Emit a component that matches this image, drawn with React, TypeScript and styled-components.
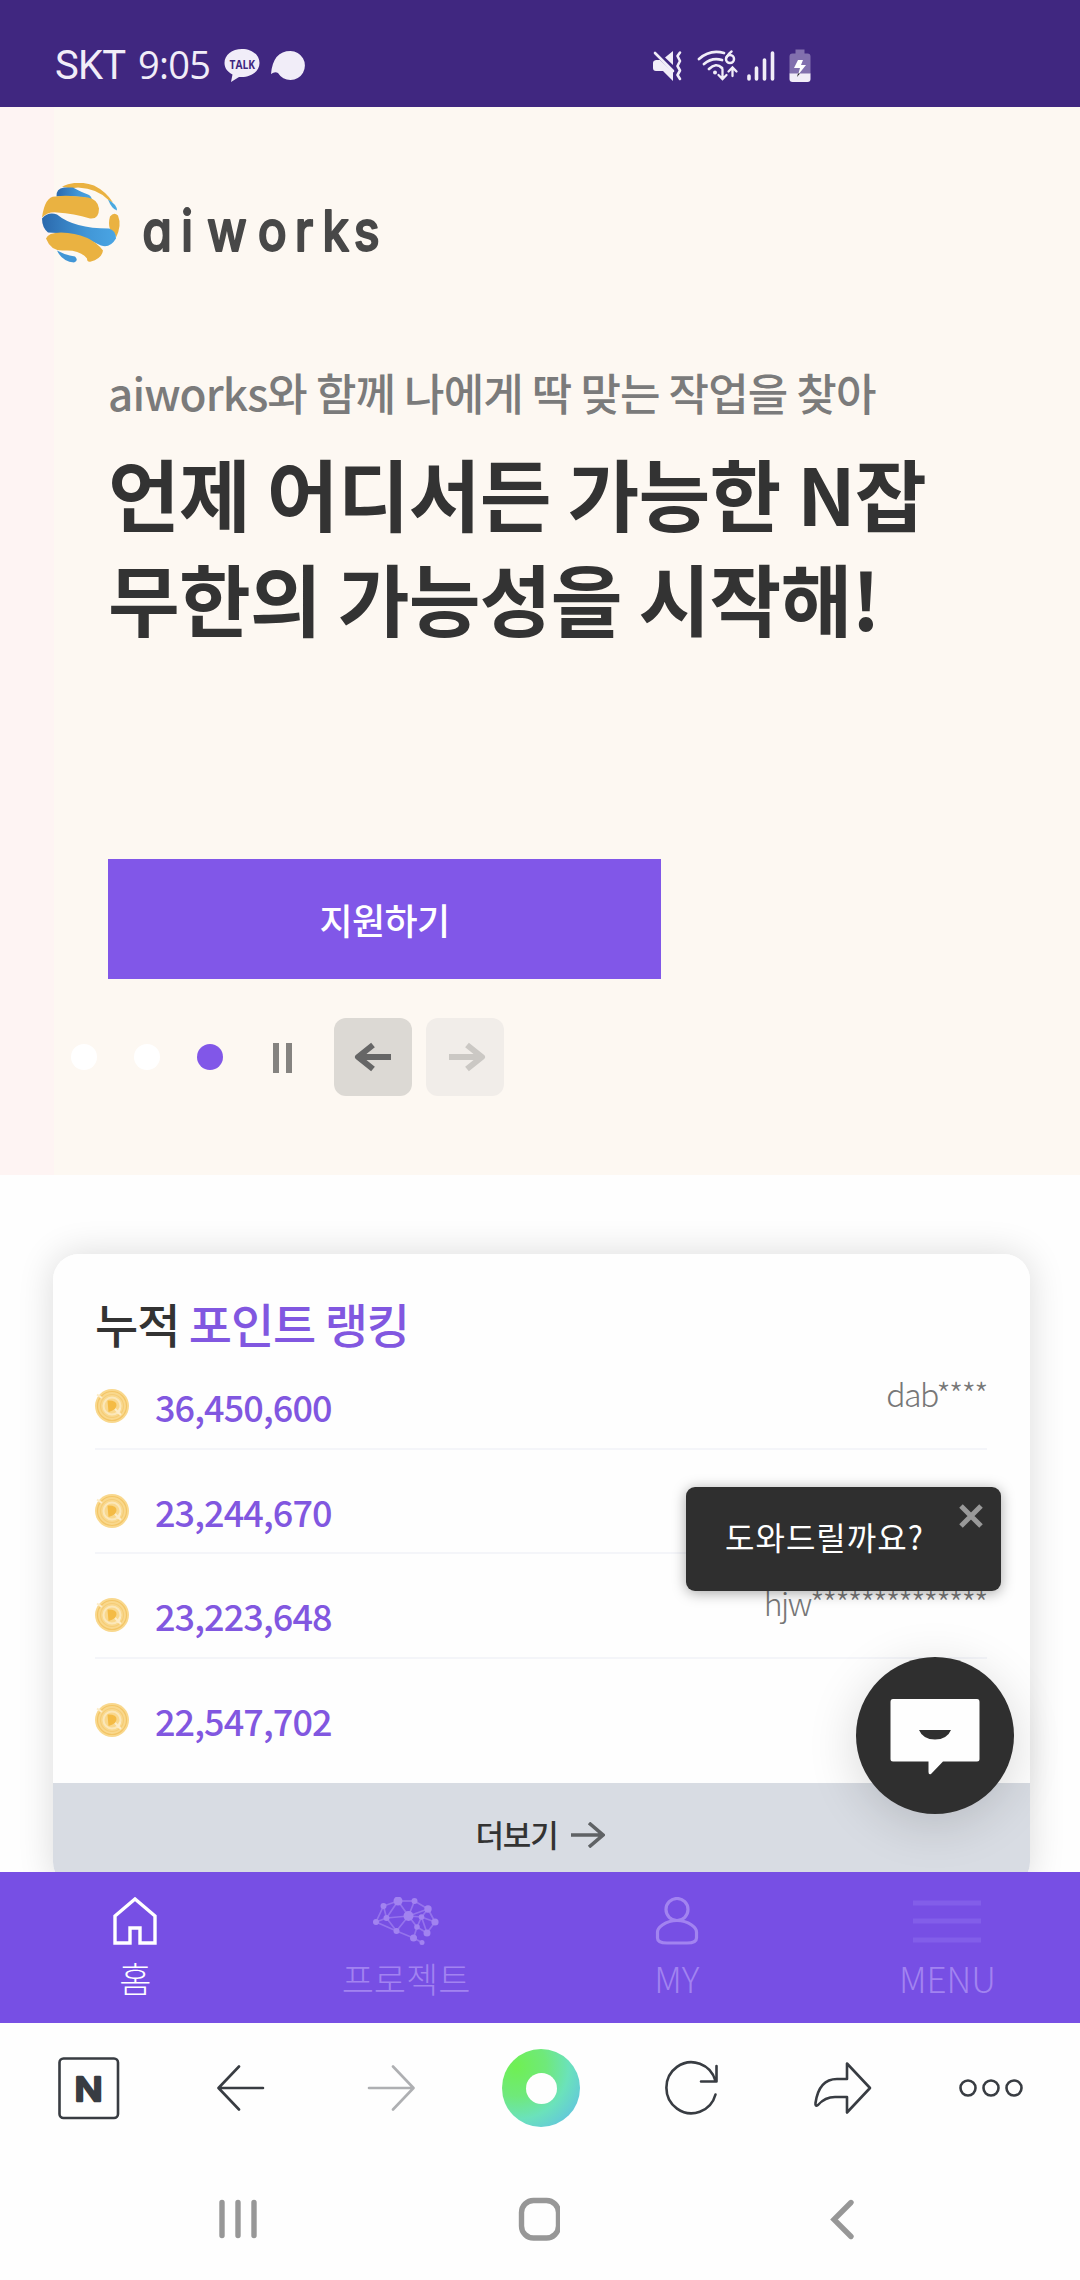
import React from "react";
import styled, { createGlobalStyle } from "styled-components";

const KR = `"Noto Sans CJK KR", "Noto Sans", sans-serif`;

const Global = createGlobalStyle`
  * { box-sizing: border-box; }
  body { margin: 0; background: #fff; font-family: ${KR}; }
`;

const Screen = styled.div`
  position: relative;
  width: 1080px;
  height: 2280px;
  overflow: hidden;
  display: flex;
  flex-direction: column;
  background: #fefefe;
  white-space: nowrap;
`;

/* ---------- status bar ---------- */
const StatusBar = styled.header`
  height: 107px;
  flex: none;
  background: #402780;
  display: flex;
  align-items: center;
  padding: 24px 56px 0 55px;
  color: #f1edf8;
`;
const Carrier = styled.span`
  font: 400 40px/48px Roboto, sans-serif;
  width: 83px;
  letter-spacing: -0.8px;
`;
const Clock = styled.span`
  font: 400 38px/48px "Open Sans", sans-serif;
  letter-spacing: -0.7px;
  width: 86px;
  padding-bottom: 3px;
`;
const StatusIcons = styled.div`
  display: flex;
  align-items: center;
`;
const StatusRight = styled(StatusIcons)`
  margin-left: 347px;
`;

/* ---------- hero ---------- */
const Hero = styled.section`
  height: 1068px;
  flex: none;
  display: flex;
  background: #fdf8f2;
`;
const HeroEdge = styled.div`
  width: 54px;
  flex: none;
  background: #fef4f3;
`;
const HeroBody = styled.div`
  flex: 1;
  display: flex;
  flex-direction: column;
`;
const Brand = styled.div`
  display: flex;
  margin: 76px 0 0 -12px;
  height: 80px;
`;
const Lead = styled.p`
  margin: 94px 0 0 54px;
  font-size: 44px;
  line-height: 70px;
  font-weight: 500;
  letter-spacing: -0.9px;
  color: #7b7b7b;
`;
const Headline = styled.h1`
  margin: 13px 0 0 54px;
  font-size: 78px;
  line-height: 105px;
  font-weight: 700;
  letter-spacing: -0.8px;
  color: #333;
`;
const ApplyButton = styled.button`
  margin: 209px 0 0 54px;
  width: 553px;
  height: 120px;
  border: 0;
  padding: 0 0 1px;
  background: #8157e8;
  color: #fff;
  font: 500 36px/50px ${KR};
  letter-spacing: -0.6px;
`;
const SliderBar = styled.div`
  display: flex;
  align-items: center;
  margin: 39px 0 0 17px;
  height: 78px;
`;
const Dot = styled.i<{ $on?: boolean }>`
  width: 26px;
  height: 26px;
  border-radius: 50%;
  margin-right: 37px;
  background: ${(p) => (p.$on ? "#8157e8" : "#fff")};
`;
const Pause = styled.div`
  width: 19px;
  height: 30px;
  margin: 1px 42px 0 13px;
  border: solid #858380;
  border-width: 0 6px;
`;
const Arrow = styled.div<{ $off?: boolean }>`
  width: 78px;
  height: 78px;
  margin-right: 13.5px;
  border-radius: 12px;
  display: grid;
  place-items: center;
  padding-left: ${(p) => (p.$off ? 5 : 0)}px;
  background: ${(p) => (p.$off ? "#f1ede9" : "#dcd9d4")};
  color: ${(p) => (p.$off ? "#cbc8c4" : "#666")};
`;

/* ---------- ranking card ---------- */
const Main = styled.main`
  height: 697px;
  flex: none;
  overflow: hidden;
  padding: 79px 50px 0 53px;
`;
const Card = styled.section`
  height: 634px;
  border-radius: 26px;
  overflow: hidden;
  background: #fefefe;
  display: flex;
  flex-direction: column;
`;
const CardShadow = styled.div`
  border-radius: 26px;
  box-shadow: 0 0 36px rgba(0, 0, 0, 0.14);
`;
const CardTitle = styled.h2`
  margin: 34px 42px 0;
  height: 57px;
  flex: none;
  font-size: 47px;
  line-height: 70px;
  font-weight: 500;
  letter-spacing: -1.1px;
  color: #333;
`;
const Accent = styled.span`
  color: #8157e0;
`;
const Row = styled.div<{ $last?: boolean }>`
  height: ${(p) => (p.$last ? 124.2 : 104.6)}px;
  flex: none;
  margin: 0 43px 0 42px;
  display: flex;
  border-bottom: 2px solid ${(p) => (p.$last ? "transparent" : "#f4f5f9")};
`;
const CoinSlot = styled.div`
  width: 60px;
  padding-top: 44px;
`;
const Points = styled.span`
  padding-top: 36px;
  font-size: 36px;
  line-height: 50px;
  font-weight: 500;
  letter-spacing: -0.9px;
  color: #8157e0;
`;
const User = styled.span`
  margin-left: auto;
  padding-top: 24px;
  font-size: 32px;
  line-height: 48px;
  font-weight: 300;
  letter-spacing: -1.55px;
  color: #777;
`;
const More = styled.div`
  flex: 1;
  background: #d8dce3;
  display: flex;
  justify-content: center;
  gap: 14px;
  padding: 28px 2px 0 0;
  font-size: 31px;
  line-height: 46px;
  font-weight: 500;
  letter-spacing: -1.2px;
  color: #333;
`;
const MoreArrow = styled.svg`
  margin-top: 11px;
`;

/* ---------- floating chat helper ---------- */
const Helper = styled.div`
  position: absolute;
  left: 686px;
  top: 1487px;
  width: 315px;
  height: 104px;
  padding: 25px 0 0 39px;
  border-radius: 9px;
  background: #2f2f2f;
  box-shadow: 0 2px 14px rgba(0, 0, 0, 0.35);
  color: #fff;
  font-size: 32px;
  line-height: 48px;
  letter-spacing: 1px;
`;
const Close = styled.svg`
  position: absolute;
  right: 18px;
  top: 17px;
`;
const ChatButton = styled.div`
  position: absolute;
  left: 856px;
  top: 1657px;
  width: 158px;
  height: 157px;
  border-radius: 50%;
  background: #2f2f2f;
  box-shadow: 0 10px 50px rgba(0, 0, 0, 0.15);
`;

/* ---------- tab bar ---------- */
const Tabs = styled.nav`
  position: relative;
  height: 151px;
  flex: none;
  display: grid;
  grid-template-columns: repeat(4, 270.7px);
  background: #774fe4;
`;
const Tab = styled.div<{ $on?: boolean }>`
  display: flex;
  flex-direction: column;
  align-items: center;
  padding-top: 25px;
  color: ${(p) => (p.$on ? "#fff" : "#a283f0")};
  font-size: 35px;
  font-weight: 300;
  line-height: 50px;
`;
const TabLabel = styled.span`
  margin-top: 8px;
`;

/* ---------- browser toolbar and system navigation ---------- */
const Toolbar = styled.div`
  height: 130px;
  flex: none;
  display: flex;
  align-items: center;
  justify-content: space-between;
  padding: 0 53px 0 54px;
`;
const SystemNav = styled.div`
  height: 127px;
  flex: none;
  display: flex;
  justify-content: space-between;
  padding: 44px 220px 0 216px;
`;

const Mute = () => (
  <svg width="32" height="32" viewBox="0 0 32 32" fill="currentColor">
    <path d="M4 10H8L21 22V31L11 21H4Q1 21 1 18V13Q1 10.500 4 10ZM13 7.500 21 1V15Z" />
    <path d="M3 3 21 21" stroke="currentColor" strokeWidth="2.6" strokeLinecap="round" />
    <path d="M28 2.500 25.500 6 28 11 25.500 16 28 20.500 25.500 25 28 29" fill="none" stroke="currentColor" strokeWidth="2.6" strokeLinecap="round" strokeLinejoin="round" />
  </svg>
);
const Gap = styled.i<{ $w: number }>`
  width: ${(p) => p.$w}px;
`;
const Wifi = () => (
  <svg width="42" height="34" viewBox="0 0 42 34" fill="none" stroke="currentColor" strokeWidth="2.700" strokeLinecap="round">
    <path d="M2 10Q13 0 27 4M7 15Q15 8 25 11M12 20Q19 13 25 19" />
    <circle cx="18" cy="23.500" r="2" fill="currentColor" stroke="none" />
    <circle cx="33" cy="10" r="4" strokeWidth="2.500" />
    <path d="M29.500 8.500Q31 5 34.500 2.500" strokeWidth="2.500" />
    <path d="M25.500 20.500v9.500m-4-4 4 4 4-4M35.500 27V18.500m-4 4 4-4 4 4" strokeWidth="2.300" />
  </svg>
);
const Signal = () => (
  <svg width="30" height="32" viewBox="0 0 30 32" stroke="currentColor" strokeWidth="3.600" strokeLinecap="round">
    <path d="M3 26V29M10.500 18V29M18.500 10V29M26.500 3V29" />
  </svg>
);
const Battery = () => (
  <svg width="22" height="34" viewBox="0 0 22 34">
    <path d="M6.500 0.500h9v4h3q3 0 3 3V25H.5V7.500q0-3 3-3h3Z" fill="#8270ae" />
    <path d="M.5 24.500h21V30q0 3-3 3h-15q-3 0-3-3Z" fill="#f1edf8" />
    <path d="M9 11h5l-2 5h5L9 26l2-7H5Z" fill="#fff" />
    <path d="M9 24.500h2L8 28Z" fill="#222" />
  </svg>
);
const Talk = () => (
  <svg width="36" height="34" viewBox="0 0 36 34">
    <path d="M18 0C8 0 .5 6 .5 14c0 5 3 9 8 11.500L7 33l8-5C26 29 35.500 23 35.500 14 35.500 6 28 0 18 0Z" fill="#f1edf8" />
    <text x="5.500" y="19.500" fontFamily="Open Sans, sans-serif" fontWeight="700" fontSize="13" textLength="25.500" lengthAdjust="spacingAndGlyphs" fill="#402780">TALK</text>
  </svg>
);
const Balloon = () => (
  <svg width="34" height="32" viewBox="0 0 34 32">
    <path d="M19.500 1A14.500 14.500 0 1 1 7 23Q4 21 0 24Q2 1 19.500 1Z" fill="#f1edf8" />
  </svg>
);

const Logo = () => (
  <svg width="350" height="82" viewBox="0 0 350 82">
    <defs>
      <linearGradient id="wave" x1="0" x2="1">
        <stop offset="0" stopColor="#2b69ad" />
        <stop offset=".6" stopColor="#4196d6" />
        <stop offset="1" stopColor="#4aa5e4" />
      </linearGradient>
    </defs>
    <g transform="translate(0 -0.5)">
      <path d="M20 4Q35-3 52 3Q64 9 71 20L67 18Q56 6 36 5L28 6Z" fill="#eab241" />
      <path d="M14.500 14Q14 6 22 5L31 5Q40 10 46 12Q49 13 50 17Q38 13 14.500 14Z" fill="url(#wave)" />
      <path d="M66 17Q75 22 75 28Q70 27 66 17Z" fill="#4aa9e0" />
      <path d="M0 35Q3 13 14 14Q24 12 46 15Q56 17 57 26Q57 37 48 36Q32 31 15 30Q6 29 0 35Z" fill="#eab241" />
      <path d="M68 34Q72 29 76 33Q80 43 74 55Q73 50 68 47Q66 41 68 34Z" fill="#eab241" />
      <path d="M0 36Q6 29 15 32Q32 46 67 46Q74 48 74 56Q68 66 59 63Q35 50 6 50Q0 45 0 36Z" fill="url(#wave)" />
      <path d="M4 56Q6 50 19 50Q48 51 61 68Q60 76 49 79Q45 80 45 76Q38 67 22 68Q9 69 4 56Z" fill="#eab241" />
      <path d="M15 68Q24 73 33 74Q37 78 32 80Q20 79 15 68Z" fill="#4196d6" />
    </g>
    <text
      transform="scale(0.86 1)"
      x="116.500 161.500 192 251 294 326 362.500"
      y="68"
      fontFamily="Inter, sans-serif"
      fontSize="56"
      fontWeight="500"
      fill="#484848"
      stroke="#484848"
      strokeWidth="1.800"
      strokeLinejoin="round"
      style={{ fontFeatureSettings: '"cv11"' }}
    >
      aiworks
    </text>
  </svg>
);

const SlideArrow = ({ flip }: { flip?: boolean }) => (
  <svg width="38" height="30" viewBox="0 0 38 30" fill="none" stroke="currentColor" strokeWidth="6" strokeLinejoin="round" transform={flip ? "scale(-1 1)" : undefined}>
    <path d="M37 15H5M19 3 4 15l15 12" />
  </svg>
);

const Coin = () => (
  <svg width="34" height="34" viewBox="0 0 34 34" fill="none">
    <circle cx="17" cy="17" r="17" fill="#f9d88d" />
    <circle cx="17" cy="17" r="14.500" stroke="#f3c566" strokeWidth="1.200" />
    <circle cx="17" cy="17" r="11.500" stroke="#f5cc76" strokeWidth="1.200" />
    <circle cx="17" cy="17" r="8.500" stroke="#fbe7b9" strokeWidth="2" />
    <path d="M12.500 11.500q9-.5 9 4.500t-8 7Z" fill="#f4bb45" />
    <path d="M2 5.500l5 3.500M20 20l6 6M25 19l-2 6" stroke="#fcecc8" strokeWidth="2" />
  </svg>
);

const Home = () => (
  <svg width="44" height="48" viewBox="0 0 44 48" fill="none" stroke="currentColor" strokeWidth="3.400">
    <path d="M2 46V19L22 2 42 19V46H27V31H17V46Z" />
  </svg>
);
const nodes: [number, number, number][] = [
  [3, 25, 3], [10.500, 9, 3], [25, 4, 4.500], [41.500, 4, 3], [55, 12, 3.700], [35.500, 19, 5],
  [13.500, 21, 3], [23.500, 34, 3], [48.500, 20, 2.800], [62, 25, 3.600], [44, 30, 2.800], [54, 36, 3.500],
  [40.500, 41, 3.500], [49, 45.500, 2.500],
];
const links: [number, number][] = [
  [0, 1], [1, 2], [2, 3], [3, 4], [4, 9], [9, 11], [11, 10], [10, 12], [12, 7], [7, 0], [0, 6], [1, 6], [2, 6],
  [6, 5], [6, 7], [2, 5], [3, 5], [4, 5], [4, 8], [5, 8], [8, 9], [5, 10], [8, 10], [8, 11], [5, 7], [12, 13],
];
const Brain = () => (
  <svg width="66" height="48" viewBox="0 0 66 48" stroke="currentColor" strokeWidth="1.700" fill="currentColor">
    {links.map(([a, b], i) => (
      <line key={i} x1={nodes[a][0]} y1={nodes[a][1]} x2={nodes[b][0]} y2={nodes[b][1]} opacity=".7" />
    ))}
    {nodes.map(([x, y, r], i) => (
      <circle key={i} cx={x} cy={y} r={r} stroke="none" />
    ))}
  </svg>
);
const Person = () => (
  <svg width="44" height="48" viewBox="0 0 44 48" fill="none" stroke="currentColor" strokeWidth="3.200">
    <circle cx="22" cy="12.500" r="11" />
    <path d="M22 23.500C10 23.500 2.500 31 2.500 35V41Q2.500 46 12 46H32Q41.500 46 41.500 41V35C41.500 31 34 23.500 22 23.500Z" />
  </svg>
);
const Burger = () => (
  <svg width="68" height="48" viewBox="0 0 68 48" fill="#825ee9">
    <path d="M0 3.500h68v5H0zM0 21.500h68v5H0zM0 40.500h68v5H0z" />
  </svg>
);

const ToolIcon = styled.svg`
  width: 70px;
  height: 80px;
  fill: none;
  stroke: #383c42;
  stroke-width: 2.6;
  stroke-linecap: round;
  stroke-linejoin: round;
`;
const NavIcon = styled.svg`
  width: 44px;
  height: 44px;
  fill: none;
  stroke: #979797;
  stroke-width: 5.4;
  stroke-linecap: round;
`;
const HomeDisc = styled.div`
  width: 78px;
  height: 78px;
  margin: 0 -1px 0 1px;
  border-radius: 50%;
  display: grid;
  place-items: center;
  background: radial-gradient(circle at 18% 22%, #6ff052 0%, #6fe97a 34%, #6be2bb 60%, #60bfe6 92%);
  &::after {
    content: "";
    width: 31px;
    height: 31px;
    border-radius: 50%;
    background: #fefefe;
  }
`;

const ranks = [
  { points: "36,450,600", user: "dab****" },
  { points: "23,244,670", user: "" },
  { points: "23,223,648", user: "hjw**************" },
  { points: "22,547,702", user: "" },
];

export default function App() {
  return (
    <Screen>
      <Global />
      <StatusBar>
        <Carrier>SKT</Carrier>
        <Clock>9:05</Clock>
        <StatusIcons>
          <Talk />
          <Gap $w={11} />
          <Balloon />
        </StatusIcons>
        <StatusRight>
          <Mute />
          <Gap $w={13} />
          <Wifi />
          <Gap $w={7} />
          <Signal />
          <Gap $w={13} />
          <Battery />
        </StatusRight>
      </StatusBar>

      <Hero>
        <HeroEdge />
        <HeroBody>
          <Brand>
            <Logo />
          </Brand>
          <Lead>aiworks와 함께 나에게 딱 맞는 작업을 찾아</Lead>
          <Headline>
            언제 어디서든 가능한 N잡
            <br />
            무한의 가능성을 시작해!
          </Headline>
          <ApplyButton>지원하기</ApplyButton>
          <SliderBar>
            <Dot />
            <Dot />
            <Dot $on />
            <Pause />
            <Arrow>
              <SlideArrow />
            </Arrow>
            <Arrow $off>
              <SlideArrow flip />
            </Arrow>
          </SliderBar>
        </HeroBody>
      </Hero>

      <Main>
        <CardShadow>
          <Card>
            <CardTitle>
              누적 <Accent>포인트 랭킹</Accent>
            </CardTitle>
            {ranks.map((r, i) => (
              <Row key={r.points} $last={i === 3}>
                <CoinSlot>
                  <Coin />
                </CoinSlot>
                <Points>{r.points}</Points>
                <User>{r.user}</User>
              </Row>
            ))}
            <More>
              더보기
              <MoreArrow width="34" height="26" viewBox="0 0 34 26" fill="none" stroke="#5f6265" strokeWidth="3.600">
                <path d="M0 13H31M18 1 32 13 18 25" />
              </MoreArrow>
            </More>
          </Card>
        </CardShadow>
      </Main>

      <Tabs>
        <Tab $on>
          <Home />
          <TabLabel>홈</TabLabel>
        </Tab>
        <Tab>
          <Brain />
          <TabLabel>프로젝트</TabLabel>
        </Tab>
        <Tab>
          <Person />
          <TabLabel>MY</TabLabel>
        </Tab>
        <Tab>
          <Burger />
          <TabLabel>MENU</TabLabel>
        </Tab>
      </Tabs>

      <Toolbar>
        <ToolIcon viewBox="0 0 70 80">
          <rect x="5.500" y="10.500" width="58.500" height="59.500" rx="4" />
          <text transform="translate(34.5 52.5) scale(1.13 1)" textAnchor="middle" fontFamily="Inter, sans-serif" fontWeight="500" fontSize="33" fill="#383c42" strokeWidth="2.600">N</text>
        </ToolIcon>
        <ToolIcon viewBox="-2 0 70 80">
          <path d="M58 40H14M34 18.500 13.500 40 34 61.500" />
        </ToolIcon>
        <ToolIcon viewBox="-5 0 70 80" opacity="0.400">
          <path d="M12 40H56M36 18.500 56.500 40 36 61.500" />
        </ToolIcon>
        <HomeDisc />
        <ToolIcon viewBox="3.500 0 70 80">
          <path d="M60 46.500A25 25.500 0 1 1 60 33M61 18V33.500H45.500" />
        </ToolIcon>
        <ToolIcon viewBox="0 0 70 80">
          <path d="M39 15.500 62 40 39 64.500V49H27Q17 49 10 57Q7 59 7.500 55Q11 31 29 31H39Z" />
        </ToolIcon>
        <ToolIcon viewBox="0 0 70 80">
          <circle cx="11" cy="40" r="7.500" />
          <circle cx="34" cy="40" r="7.500" />
          <circle cx="57" cy="40" r="7.500" />
        </ToolIcon>
      </Toolbar>
      <SystemNav>
        <NavIcon viewBox="0 0 44 44">
          <path d="M6 5.500V38.500M22 5.500V38.500M38 5.500V38.500" />
        </NavIcon>
        <NavIcon viewBox="0 0 44 44">
          <rect x="5.500" y="3.500" width="37" height="37.500" rx="12" />
        </NavIcon>
        <NavIcon viewBox="0 0 44 44">
          <path d="M35 5.500 18 22.500 35 39.500" />
        </NavIcon>
      </SystemNav>

      <Helper>
        도와드릴까요?
        <Close width="24" height="24" viewBox="0 0 24 24" stroke="#999" strokeWidth="5">
          <path d="M2 2 22 22M22 2 2 22" />
        </Close>
      </Helper>
      <ChatButton>
        <svg width="158" height="157" viewBox="0 0 158 157">
          <path d="M37 42H121Q123.500 42 123.500 45V102Q123.500 104.500 121 104.500H87L75 117Q72.500 118 72.500 115V104.500H37Q34.500 104.500 34.500 102V45Q34.500 42 37 42Z" fill="#fefefe" />
          <path d="M63 73H95Q91 82.500 79 82.500Q67 82.500 63 73Z" fill="#2f2f2f" />
        </svg>
      </ChatButton>
    </Screen>
  );
}
